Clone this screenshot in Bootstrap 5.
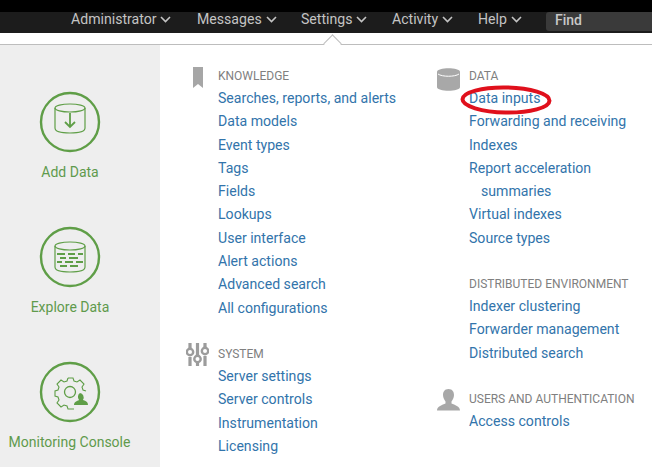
<!doctype html>
<html lang="en">
<head>
<meta charset="utf-8">
<title>Settings</title>
<link href="https://cdn.jsdelivr.net/npm/bootstrap@5.3.0/dist/css/bootstrap.min.css" rel="stylesheet">
<style>
html,body{height:467px;overflow:hidden;background:#fff;font-family:Roboto,"Liberation Sans",sans-serif}
.top-strip{height:12px;background:#000}
.nav-strip{height:21px;background:#1c1c1c;position:relative}
.nav-entry{position:absolute;top:-4px;color:#c4c4c4;font-size:14.1px;line-height:22px;text-decoration:none;display:flex;align-items:center;gap:4px}
.find-box{position:absolute;left:546px;right:0;top:0;height:19px;background:#3a3a3a;border-radius:3px 0 0 3px;color:#c8c8c8;font-size:14px;font-weight:500;line-height:17px;padding-left:9px}
.rule-strip{height:11px;border-bottom:1px solid #bdbdbd;position:relative;box-sizing:content-box}
.rule-caret{position:absolute;left:326px;top:4px;width:13px;height:13px;background:#fff;border-left:1px solid #bdbdbd;border-top:1px solid #bdbdbd;transform:rotate(45deg)}
.page-body{height:423px}
.side-rail{width:160px;background:#eeeeee;flex:none}
.side-item{position:absolute;left:0;width:140px;text-align:center;color:#5f9a4c;font-size:14px;line-height:20px}
.side-item svg{display:block;margin:0 auto 9px}
.menu-col{position:absolute;top:21px}
.menu-head{color:#808080;font-size:12px;line-height:21px;text-transform:uppercase;white-space:nowrap}
.menu-link{display:block;color:#3274ab;font-size:14.1px;line-height:23.3px;text-decoration:none;white-space:nowrap}
.menu-sec{position:relative;margin-bottom:24px}
.menu-ico{position:absolute;top:0}
.indent-line{padding-left:12px}
.ring-mark{position:absolute;left:-10px;top:18px;pointer-events:none}
.page-wrap{position:relative}
</style>
</head>
<body>
<header>
  <div class="top-strip"></div>
  <div class="nav-strip">
    <a class="nav-entry" style="left:71px" href="#">Administrator <svg width="11" height="7" viewBox="0 0 11 7"><path d="M1 1l4.500 4.500L10 1" fill="none" stroke="#c4c4c4" stroke-width="1.600"/></svg></a>
    <a class="nav-entry" style="left:197px" href="#">Messages <svg width="11" height="7" viewBox="0 0 11 7"><path d="M1 1l4.500 4.500L10 1" fill="none" stroke="#c4c4c4" stroke-width="1.600"/></svg></a>
    <a class="nav-entry" style="left:301px" href="#">Settings <svg width="11" height="7" viewBox="0 0 11 7"><path d="M1 1l4.500 4.500L10 1" fill="none" stroke="#c4c4c4" stroke-width="1.600"/></svg></a>
    <a class="nav-entry" style="left:392px" href="#">Activity <svg width="11" height="7" viewBox="0 0 11 7"><path d="M1 1l4.500 4.500L10 1" fill="none" stroke="#c4c4c4" stroke-width="1.600"/></svg></a>
    <a class="nav-entry" style="left:478px" href="#">Help <svg width="11" height="7" viewBox="0 0 11 7"><path d="M1 1l4.500 4.500L10 1" fill="none" stroke="#c4c4c4" stroke-width="1.600"/></svg></a>
    <div class="find-box">Find</div>
  </div>
  <div class="rule-strip"><span class="rule-caret"></span></div>
</header>
<div class="page-body d-flex page-wrap">
  <aside class="side-rail">
    <div class="side-item" style="top:46px">
      <svg width="62" height="62" viewBox="0 0 62 62" fill="none" stroke="#5f9e47"><circle cx="31" cy="31" r="29" stroke-width="2.400"/><path d="M16 17v20c0 3.500 7 5 15 5s15-1.500 15-5V17" stroke-width="1.200"/><ellipse cx="31" cy="17" rx="15" ry="4" stroke-width="1.200"/><path d="M31 22v14M26 31l5 5 5-5" stroke-width="1.800"/></svg>
      <div>Add Data</div>
    </div>
    <div class="side-item" style="top:181px">
      <svg width="62" height="62" viewBox="0 0 62 62" fill="none" stroke="#5f9e47"><circle cx="31" cy="31" r="29" stroke-width="2.400"/><path d="M16 20v21c0 3.500 7 5 15 5s15-1.500 15-5V20" stroke-width="1.200"/><ellipse cx="31" cy="20" rx="15" ry="4" stroke-width="1.200"/><path d="M18 28h8M29 28h7M39 28h5M21 32h6M30 32h9M18 36h5M26 36h8M37 36h7M21 40h7M31 40h8" stroke-width="2.200"/></svg>
      <div>Explore Data</div>
    </div>
    <div class="side-item" style="top:316px">
      <svg width="62" height="62" viewBox="0 0 62 62" fill="none" stroke="#5f9e47"><circle cx="31" cy="31" r="29" stroke-width="2.400"/><path d="M29 17h5l1 3 3 1 3-2 4 4-2 3 1 3 3 1M29 17l-1 3-3 1-3-2-4 4 2 3-1 3-3 1v5l3 1 1 3-2 3 4 4 3-2 3 1 1 3h6" stroke-width="1.100"/><circle cx="31" cy="31" r="5.500" stroke-width="1.300"/><path d="M41 32a4 4.500 0 0 1 3 7c3 1 5 2 5 5H35c0-3 3-4 5-5a4 4.500 0 0 1 1-7z" fill="#5f9e47" stroke="none"/></svg>
      <div style="margin-left:-1px;white-space:nowrap">Monitoring Console</div>
    </div>
  </aside>
  <main class="flex-grow-1 position-relative">
    <div class="menu-col" style="left:58px">
      <section class="menu-sec">
        <svg class="menu-ico" style="left:-26px;top:1px" width="12" height="22" viewBox="0 0 12 22"><path d="M1 0h10v21l-5-4-5 4z" fill="#a6a6a6"/></svg>
        <div class="menu-head">Knowledge</div>
        <a class="menu-link" href="#">Searches, reports, and alerts</a>
        <a class="menu-link" href="#">Data models</a>
        <a class="menu-link" href="#">Event types</a>
        <a class="menu-link" href="#">Tags</a>
        <a class="menu-link" href="#">Fields</a>
        <a class="menu-link" href="#">Lookups</a>
        <a class="menu-link" href="#">User interface</a>
        <a class="menu-link" href="#">Alert actions</a>
        <a class="menu-link" href="#">Advanced search</a>
        <a class="menu-link" href="#">All configurations</a>
      </section>
      <section class="menu-sec">
        <svg class="menu-ico" style="left:-32px;top:-2px" width="23" height="25" viewBox="0 0 23 25" fill="none" stroke="#9c9c9c"><path d="M4 1v5M4 15v9M11.500 1v12M11.500 21v3M19 1v4M19 14v10" stroke-width="3.200"/><circle cx="4" cy="10" r="3.200" stroke-width="2.400"/><circle cx="11.500" cy="17" r="3.200" stroke-width="2.400"/><circle cx="19" cy="9" r="3.200" stroke-width="2.400"/></svg>
        <div class="menu-head">System</div>
        <a class="menu-link" href="#">Server settings</a>
        <a class="menu-link" href="#">Server controls</a>
        <a class="menu-link" href="#">Instrumentation</a>
        <a class="menu-link" href="#">Licensing</a>
      </section>
    </div>
    <div class="menu-col" style="left:309px">
      <section class="menu-sec">
        <svg class="menu-ico" style="left:-32px;top:2px" width="23" height="23" viewBox="0 0 23 23"><path d="M0 4c0-5 23-5 23 0v15c0 5-23 5-23 0z" fill="#a8a8a8"/><path d="M1 6c4 3 17 3 21 0" fill="none" stroke="#fff" stroke-width="1"/></svg>
        <div class="menu-head">Data</div>
        <a class="menu-link" href="#">Data inputs</a>
        <a class="menu-link" href="#">Forwarding and receiving</a>
        <a class="menu-link" href="#">Indexes</a>
        <a class="menu-link" href="#">Report acceleration</a>
        <a class="menu-link indent-line" href="#">summaries</a>
        <a class="menu-link" href="#">Virtual indexes</a>
        <a class="menu-link" href="#">Source types</a>
        <svg class="ring-mark" width="94" height="32" viewBox="0 0 94 32"><ellipse cx="47" cy="16" rx="43.500" ry="12.500" fill="none" stroke="#e0101c" stroke-width="4" transform="rotate(1 47 16)"/></svg>
      </section>
      <section class="menu-sec">
        <div class="menu-head">Distributed environment</div>
        <a class="menu-link" href="#">Indexer clustering</a>
        <a class="menu-link" href="#">Forwarder management</a>
        <a class="menu-link" href="#">Distributed search</a>
      </section>
      <section class="menu-sec">
        <svg class="menu-ico" style="left:-32px;top:-1px" width="23" height="24" viewBox="0 0 23 24"><path d="M11.500 1c4 0 5.500 3 5.500 6 0 3-1.500 5-2.500 6.500v2c3 1.500 8.500 2.500 8.500 7H0c0-4.500 5.500-5.500 8.500-7v-2C7.500 12 6 10 6 7c0-3 1.500-6 5.500-6z" fill="#a8a8a8"/></svg>
        <div class="menu-head">Users and authentication</div>
        <a class="menu-link" href="#">Access controls</a>
      </section>
    </div>
  </main>
</div>
<script src="https://cdn.jsdelivr.net/npm/bootstrap@5.3.0/dist/js/bootstrap.bundle.min.js"></script>
</body>
</html>
